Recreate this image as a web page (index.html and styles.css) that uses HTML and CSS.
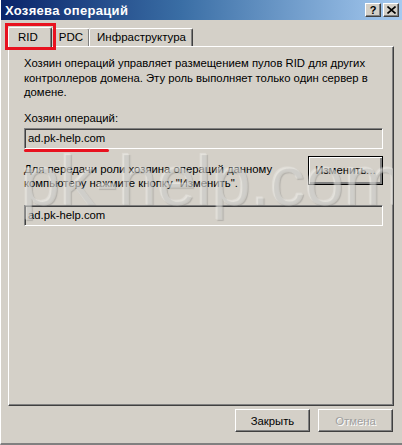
FILE: index.html
```html
<!DOCTYPE html>
<html>
<head>
<meta charset="utf-8">
<link rel="stylesheet" href="styles.css">
</head>
<body>
<div class="window">
  <div class="titlebar">
    <span class="title">Хозяева операций</span>
    <div class="tbtns">
      <span class="tbtn">?</span>
      <span class="tbtn x">
        <svg width="9" height="8" viewBox="0 0 9 8"><path d="M0.5 0.5 L8.5 7.5 M8.5 0.5 L0.5 7.5" stroke="#000" stroke-width="1.6"/></svg>
      </span>
    </div>
  </div>
  <div class="body">
    <div class="tabs">
      <div class="tab active">RID</div>
      <div class="tab">PDC</div>
      <div class="tab">Инфраструктура</div>
      <div class="redbox"></div>
    </div>
    <div class="panel">
      <p class="desc">Хозяин операций управляет размещением пулов RID для других контроллеров домена. Эту роль выполняет только один сервер в домене.</p>
      <div class="label">Хозяин операций:</div>
      <div class="field">ad.pk-help.com<div class="redline"></div></div>
      <div class="change">
        <p class="desc2">Для передачи роли хозяина операций данному компьютеру нажмите кнопку "Изменить".</p>
        <div class="btn focus">Изменить...</div>
      </div>
      <div class="field f2">ad.pk-help.com</div>
      <div class="watermark">pk-help.com</div>
    </div>
    <div class="footer">
      <div class="btn">Закрыть</div>
      <div class="btn disabled">Отмена</div>
    </div>
  </div>
</div>
</body>
</html>
```
FILE: styles.css
```css
html, body { margin: 0; padding: 0; }
body { width: 402px; height: 445px; overflow: hidden; background: #d4d0c8; }
.window {
  width: 402px; height: 445px; box-sizing: border-box;
  background: #d4d0c8;
  border-left: 1px solid #ffffff;
  border-bottom: 2px solid #808080;
  font-family: "Liberation Sans", Arial, sans-serif;
  font-size: 11px; color: #000;
  display: flex; flex-direction: column;
  overflow: hidden;
}
.titlebar {
  height: 20px; margin-top: 0;
  background: linear-gradient(to right, #0a246a 0%, #3a6ea5 45%, #a6caf0 100%);
  display: flex; align-items: center; justify-content: space-between;
  padding: 0 3px 0 4px;
}
.title { color: #fff; font-weight: bold; font-size: 13px; letter-spacing: 0.3px; }
.tbtns { display: flex; gap: 2px; }
.tbtn {
  width: 16px; height: 14px; box-sizing: border-box;
  background: #d4d0c8;
  border: 1px solid; border-color: #fff #404040 #404040 #fff;
  box-shadow: inset -1px -1px 0 #808080;
  display: flex; align-items: center; justify-content: center;
  font-weight: bold; font-size: 11px; line-height: 1;
}
.body { flex: 1; display: flex; flex-direction: column; padding: 6px 8px 0 7px; position: relative; }
.tabs { display: flex; height: 20px; padding-left: 0; position: relative; align-items: flex-end; }
.tab {
  height: 18px; box-sizing: border-box;
  padding: 2px 6px 0 7px;
  border: 1px solid; border-bottom: none;
  border-color: #fff #404040 transparent #fff;
  box-shadow: inset -1px 0 0 #808080;
  border-radius: 2px 2px 0 0;
  margin-right: -1px;
  font-size: 11.5px;
}
.tab.active { height: 20px; padding: 3px 13px 0 9px; margin-bottom: -1px; background: #d4d0c8; z-index: 2; position: relative; }
.redbox {
  position: absolute; left: -3px; top: -3px; width: 51px; height: 27px;
  box-sizing: border-box; border: 3px solid #e8121f; z-index: 3;
}
.panel {
  height: 360px; box-sizing: border-box;
  border: 1px solid; border-color: #fff #404040 #404040 #fff;
  box-shadow: inset -1px -1px 0 #808080;
  padding: 9px 13px 0 15px;
  position: relative;
  overflow: hidden;
}
.desc { margin: 0; line-height: 14.5px; width: 345px; font-size: 11.3px; }
.label { margin-top: 11px; line-height: 14px; font-size: 11.3px; }
.field {
  margin-top: 3px; height: 21px; box-sizing: border-box;
  border: 1px solid; border-color: #808080 #fff #fff #808080;
  box-shadow: inset 1px 1px 0 #404040;
  padding: 3px 0 0 3px; width: 359px; position: relative; font-size: 11.3px;
}
.redline { position: absolute; left: -1px; top: 20px; width: 85px; height: 3px; background: #e8121f; border-radius: 2px; }
.change { display: flex; justify-content: space-between; align-items: flex-start; margin-top: 7px; width: 359px; }
.desc2 { margin: 6px 0 0 0; line-height: 14px; font-size: 11.3px; width: 280px; }
.btn {
  width: 75px; height: 23px; box-sizing: border-box;
  border: 1px solid; border-color: #fff #404040 #404040 #fff;
  box-shadow: inset -1px -1px 0 #808080;
  display: flex; align-items: center; justify-content: center; font-size: 11.3px;
}
.btn.focus { border: 1px solid #000; box-shadow: inset 1px 1px 0 #fff, inset -2px -2px 0 #808080; height: 29px; width: 75px; }
.f2 { margin-top: 15px; }
.footer { display: flex; justify-content: flex-end; gap: 8px; padding-top: 3px; margin-right: 1px; }
.btn.disabled { color: #a0a0a0; text-shadow: 1px 1px 0 #fff; }
.watermark {
  position: absolute; left: 12px; top: 94px;
  font-family: "Liberation Sans", Arial, sans-serif; font-size: 70px; line-height: normal;
  color: rgba(240,240,236,0.35); text-shadow: 1px 1px 1px rgba(110,110,110,0.3), -1px -1px 1px rgba(255,255,255,0.3);
  pointer-events: none; white-space: nowrap;
}
```
